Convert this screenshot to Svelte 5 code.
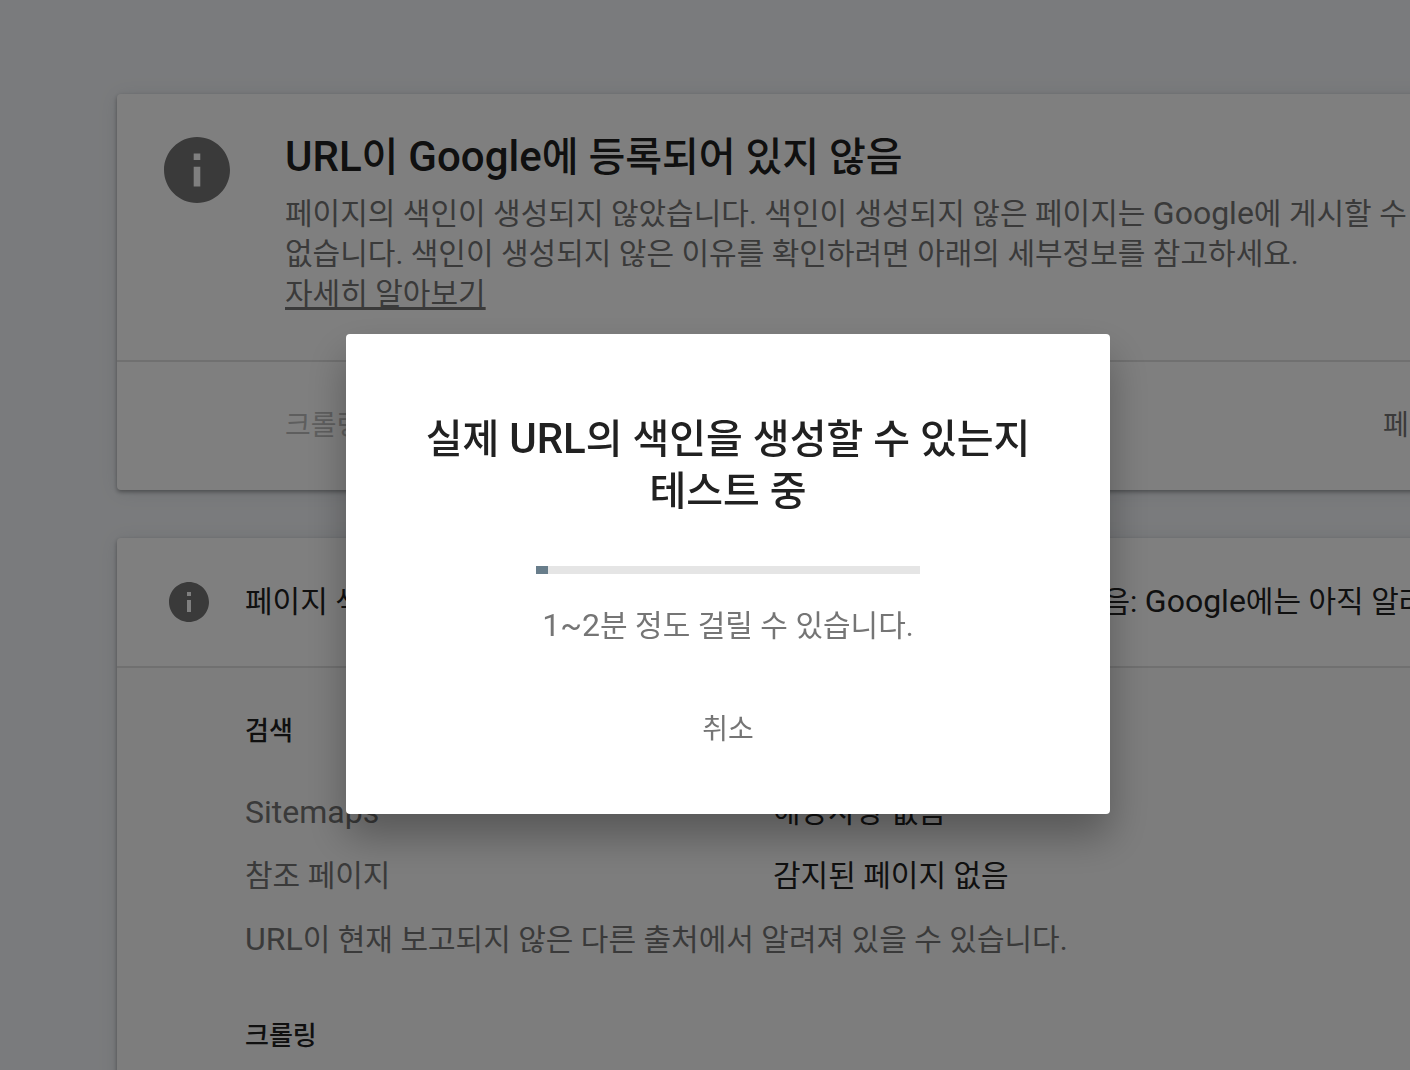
<script>
    let progress = $state(3.2);
    let open = $state(true);

    const discovery = [
        {label: "Sitemaps", value: "해당사항 없음", latin: true},
        {label: "참조 페이지", value: "감지된 페이지 없음"}
    ];
</script>

{#snippet infoIcon()}
    <svg class="info" viewBox="2 2 20 20" aria-hidden="true">
        <path d="M12 2C6.48 2 2 6.48 2 12s4.48 10 10 10 10-4.48 10-10S17.52 2 12 2zm1 15h-2v-6h2v6zm0-8h-2V7h2v2z" />
    </svg>
{/snippet}

<main class="page">
    <section class="card">
        <div class="verdict">
            <div class="icon large">{@render infoIcon()}</div>
            <div>
                <h1><span class="latin">URL</span>이 <span class="latin">Google</span>에 등록되어 있지 않음</h1>
                <p>
                    페이지의 색인이 생성되지 않았습니다. 색인이 생성되지 않은 페이지는 <span class="latin">Google</span>에 게시할 수<br />
                    없습니다. 색인이 생성되지 않은 이유를 확인하려면 아래의 세부정보를 참고하세요.<br />
                    <a href="#learn">자세히 알아보기</a>
                </p>
            </div>
        </div>
        <div class="actions">
            <button disabled>크롤링된 페이지 보기</button>
            <button>페이지 변경</button>
        </div>
    </section>

    <section class="card">
        <div class="summary">
            <div class="icon">{@render infoIcon()}</div>
            <h2>페이지 색인 생성</h2>
            <span>페이지의 색인이 생성되지 않음: <span class="latin">Google</span>에는 아직 알려지지 않은 URL입니다</span>
        </div>
        <div class="details">
            <h3>검색</h3>
            <dl>
                {#each discovery as row}
                    <dt class:latin={row.latin}>{row.label}</dt>
                    <dd>{row.value}</dd>
                {/each}
            </dl>
            <p class="note"><span class="latin">URL</span>이 현재 보고되지 않은 다른 출처에서 알려져 있을 수 있습니다.</p>
            <h3>크롤링</h3>
        </div>
    </section>
</main>

{#if open}
    <div class="overlay">
        <div class="dialog" role="dialog" aria-modal="true" aria-labelledby="dialog-title">
            <h2 id="dialog-title">실제 <span class="latin">URL</span>의 색인을 생성할 수 있는지 테스트 중</h2>
            <div class="progress" role="progressbar" aria-label="진행률" aria-valuenow={progress}>
                <div class="bar" style="width: {progress}%"></div>
            </div>
            <p><span class="latin">1~2</span>분 정도 걸릴 수 있습니다.</p>
            <button onclick={() => (open = false)}>취소</button>
        </div>
    </div>
{/if}

<style>
    :global(body) {
        background: #f5f7fa;
        font-family: Roboto, "Noto Sans CJK KR", sans-serif;
        font-size: 30px;
        line-height: 40px;
        color: #212121;
    }

    :global(*) {
        box-sizing: border-box;
    }

    h1, h2, h3, p, dl, dd {
        margin: 0;
        font-weight: 400;
    }

    button {
        padding: 0;
        border: none;
        background: none;
        font-family: inherit;
        font-size: 28px;
        line-height: 40px;
        color: #757575;
        cursor: pointer;
    }

    .latin {
        font-size: 32px;
    }

    span.latin {
        line-height: 1;
    }

    h1 .latin, .dialog h2 .latin {
        font-size: 42px;
    }

    .page {
        height: 100vh;
        padding: 94px 0 0 117px;
        overflow: hidden;
        white-space: nowrap;
    }

    .card {
        margin: 0 -24px 48px 0;
        background: #fff;
        border-radius: 4px;
        box-shadow: 0 2px 4px rgba(0, 0, 0, 0.35), 0 2px 20px rgba(60, 80, 110, 0.12);
    }

    .verdict {
        display: flex;
        gap: 55px;
        height: 268px;
        padding: 38px 0 0 47px;
        border-bottom: 2px solid #e0e0e0;
    }

    .verdict h1 {
        margin-bottom: 10px;
        font-size: 40px;
        line-height: 52px;
        font-weight: 500;
    }

    .verdict p {
        color: #757575;
    }

    .verdict a {
        color: inherit;
        text-decoration: underline;
        text-decoration-thickness: 3px;
        text-underline-offset: 3px;
    }

    .icon {
        flex: none;
        width: 40px;
        height: 40px;
        fill: #757575;
    }

    .icon.large {
        width: 66px;
        height: 66px;
        margin-top: 5px;
    }

    .info {
        display: block;
        width: 100%;
        height: 100%;
    }

    .actions {
        display: flex;
        align-items: center;
        height: 128px;
        padding-left: 168px;
        overflow: hidden;
    }

    .actions button {
        flex: none;
        width: 1098px;
        text-align: left;
    }

    .actions button:disabled {
        color: #bdbdbd;
    }

    .summary {
        display: flex;
        align-items: center;
        height: 130px;
        padding-left: 52px;
        border-bottom: 2px solid #e0e0e0;
        overflow: hidden;
    }

    .summary h2 {
        flex: none;
        width: 504px;
        margin-left: 36px;
        font-size: 30px;
    }

    .details {
        height: 600px;
        padding: 43px 0 0 128px;
        background: #fafafa;
    }

    .details h3 {
        font-size: 26px;
        font-weight: 500;
    }

    dl {
        display: grid;
        grid-template-columns: 528px 1fr;
        row-gap: 24px;
        margin: 41px 0 24px;
    }

    dt, .note {
        color: #757575;
    }

    .note {
        margin-bottom: 56px;
    }

    .overlay {
        position: fixed;
        inset: 0;
        display: flex;
        align-items: center;
        justify-content: center;
        padding: 78px 0 0 46px;
        background: rgba(0, 0, 0, 0.5);
    }

    .dialog {
        display: flex;
        flex-direction: column;
        align-items: center;
        width: 764px;
        padding: 80px 72px 64px;
        background: #fff;
        border-radius: 4px;
        box-shadow: 0 22px 40px rgba(0, 0, 0, 0.3);
        text-align: center;
    }

    .dialog h2 {
        font-size: 40px;
        line-height: 52px;
        font-weight: 500;
        word-break: keep-all;
    }

    .progress {
        width: 384px;
        height: 8px;
        margin: 48px 0 32px;
        background: #e5e5e5;
    }

    .bar {
        height: 100%;
        background: #687d8b;
    }

    .dialog p {
        margin-bottom: 64px;
        color: #757575;
    }
</style>
